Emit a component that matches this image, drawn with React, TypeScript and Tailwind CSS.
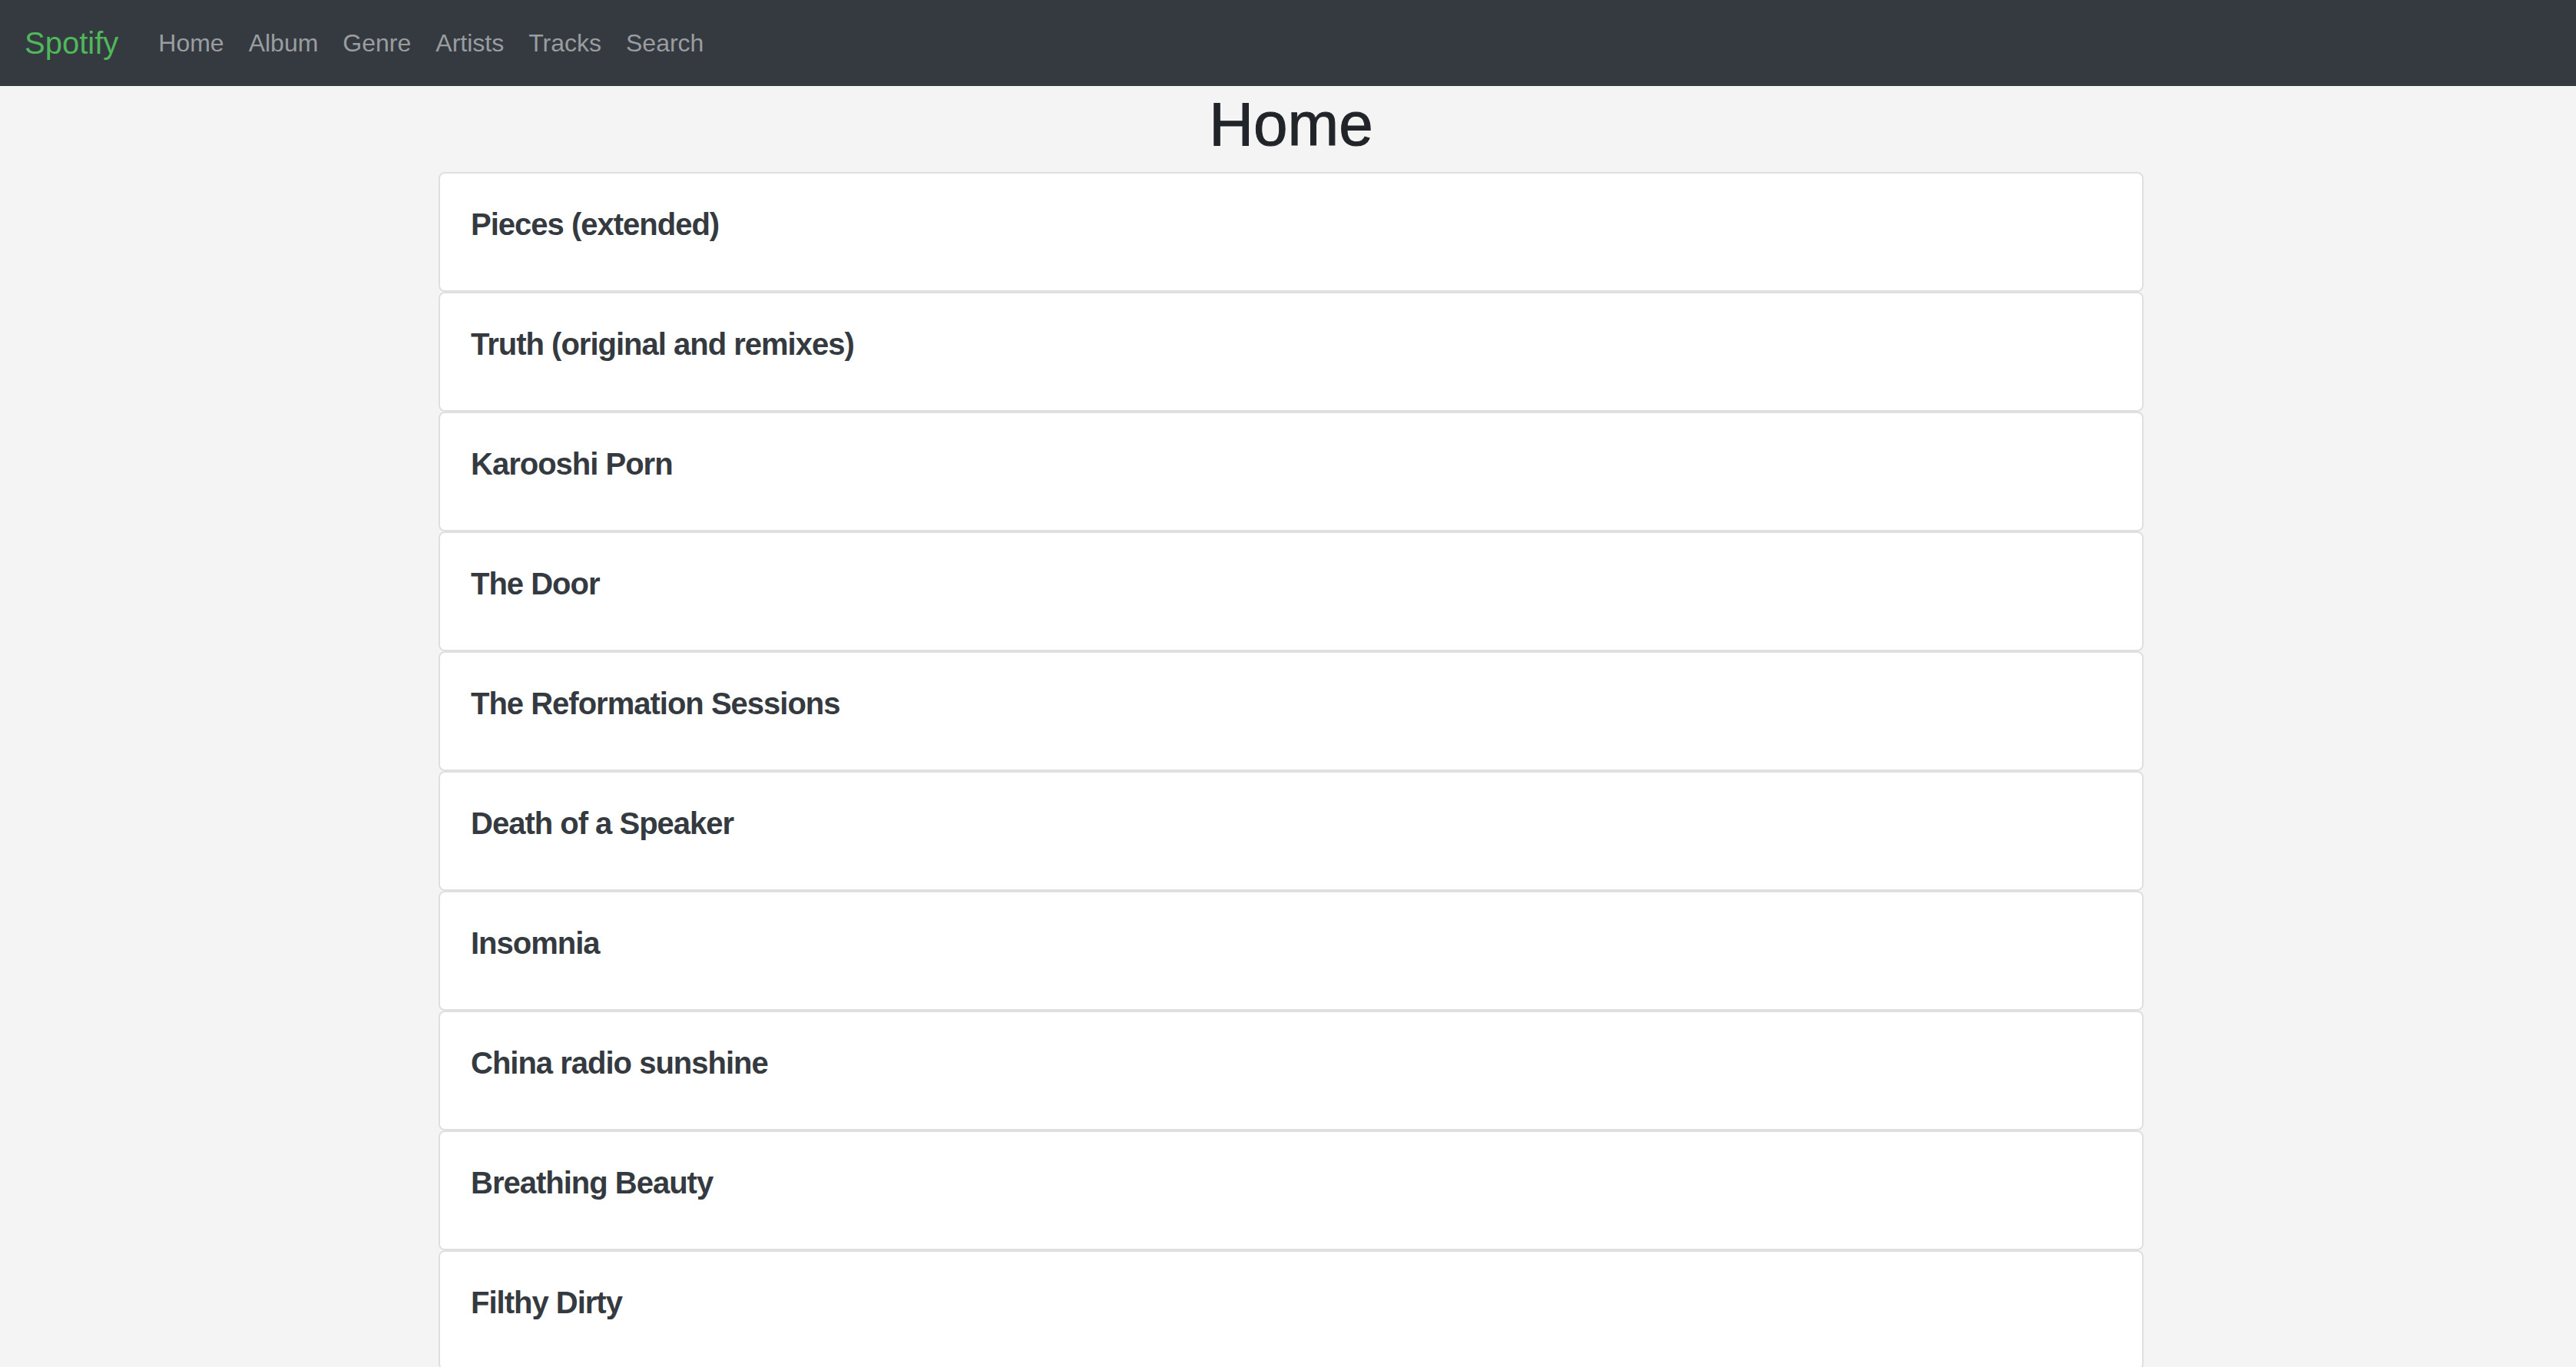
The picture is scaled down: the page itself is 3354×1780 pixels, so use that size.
import React from 'react'

// Album list shown on the home page
const albums: string[] = [
	'Pieces (extended)',
	'Truth (original and remixes)',
	'Karooshi Porn',
	'The Door',
	'The Reformation Sessions',
	'Death of a Speaker',
	'Insomnia',
	'China radio sunshine',
	'Breathing Beauty',
	'Filthy Dirty',
]

const links = ['Home', 'Album', 'Genre', 'Artists', 'Tracks', 'Search']

function Navbar() {
	return (
		<nav className="flex h-[112px] items-center bg-[#343a40] px-[32px]">
			<a href="#" className="mr-[36px] text-[40px] leading-[60px] text-[#4fb85b]">
				Spotify
			</a>
			<ul className="flex items-center">
				{links.map((link) => (
					<li key={link}>
						<a href="#" className="block px-[16px] text-[32px] leading-[48px] text-[#9a9da0]">
							{link}
						</a>
					</li>
				))}
			</ul>
		</nav>
	)
}

function AlbumCard({ title }: { title: string }) {
	return (
		<div className="h-[156px] rounded-[8px] border-2 border-[#dfdfdf] bg-white px-[40px] pt-[42px]">
			<h5 className="text-[40px] font-bold leading-[48px] tracking-[-1px] text-[#343a40]">
				{title}
			</h5>
		</div>
	)
}

export default function App() {
	return (
		<div className="min-h-screen bg-[#f4f4f4] font-['Liberation_Sans',Arial,sans-serif]">
			<Navbar />
			<main className="mx-auto w-[2280px] pl-[34px] pr-[26px]">
				<h1 className="mb-[14px] pt-[2px] text-center text-[80px] font-medium leading-[96px] text-[#212529] [-webkit-text-stroke:1px_#212529]">
					Home
				</h1>
				<div className="flex flex-col">
					{albums.map((album) => (
						<AlbumCard key={album} title={album} />
					))}
				</div>
			</main>
		</div>
	)
}
